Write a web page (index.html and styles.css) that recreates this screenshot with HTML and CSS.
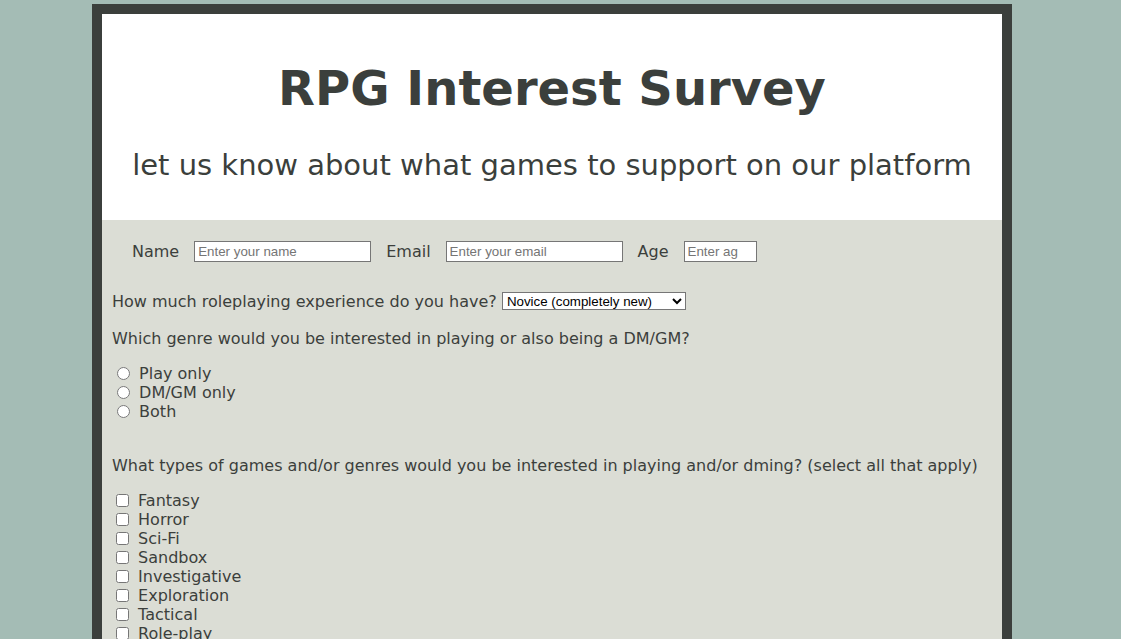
FILE: index.html
```html
<!DOCTYPE html>
<html lang="en">
<head>
<meta charset="utf-8">
<title>RPG Interest Survey</title>
<link rel="stylesheet" href="styles.css">
</head>
<body>
<main class="container">
  <header class="header">
    <h1 class="title">RPG Interest Survey</h1>
    <p class="subtitle">let us know about what games to support on our platform</p>
  </header>
  <form class="survey">
    <div class="info-row">
      <label for="name">Name</label>
      <input id="name" class="text-input" type="text" placeholder="Enter your name">
      <label for="email">Email</label>
      <input id="email" class="text-input" type="email" placeholder="Enter your email">
      <label for="age">Age</label>
      <input id="age" class="text-input age-input" type="number" placeholder="Enter age">
    </div>
    <p class="question question-first">How much roleplaying experience do you have?
      <select class="select">
        <option>Novice (completely new)</option>
        <option>Some experience</option>
        <option>Veteran</option>
      </select>
    </p>
    <p class="question question-second">Which genre would you be interested in playing or also being a DM/GM?</p>
    <div class="radio-list">
      <label class="option"><input type="radio" name="role" class="radio"> Play only</label>
      <label class="option"><input type="radio" name="role" class="radio"> DM/GM only</label>
      <label class="option"><input type="radio" name="role" class="radio"> Both</label>
    </div>
    <p class="question question-third">What types of games and/or genres would you be interested in playing and/or dming? (select all that apply)</p>
    <div class="check-list">
      <label class="option"><input type="checkbox" class="check"> Fantasy</label>
      <label class="option"><input type="checkbox" class="check"> Horror</label>
      <label class="option"><input type="checkbox" class="check"> Sci-Fi</label>
      <label class="option"><input type="checkbox" class="check"> Sandbox</label>
      <label class="option"><input type="checkbox" class="check"> Investigative</label>
      <label class="option"><input type="checkbox" class="check"> Exploration</label>
      <label class="option"><input type="checkbox" class="check"> Tactical</label>
      <label class="option"><input type="checkbox" class="check"> Role-play</label>
      <label class="option"><input type="checkbox" class="check"> Survival</label>
    </div>
  </form>
</main>
</body>
</html>
```

FILE: styles.css
```css
html, body {
  margin: 0;
  padding: 0;
}
body {
  background: #a4bcb5;
  font-family: Verdana, "DejaVu Sans", sans-serif;
  color: #3b3f3c;
  padding-right: 17px;
}
.container {
  width: 900px;
  margin: 4px auto 0;
  border: 10px solid #3b3f3c;
  background: #dbddd5;
}
.header {
  background: #ffffff;
  text-align: center;
  height: 206px;
  display: flex;
  flex-direction: column;
  align-items: center;
}
.title {
  margin: 46px 0 0;
  font-size: 48px;
  font-weight: bold;
  line-height: 56px;
}
.subtitle {
  margin: 31px 0 0;
  font-size: 29px;
  line-height: 36px;
}
.survey {
  padding: 21px 10px 20px;
  font-size: 16px;
}
.info-row {
  display: flex;
  align-items: center;
  gap: 15px;
  padding-left: 20px;
  height: 21px;
}
.text-input {
  width: 177px;
  height: 21px;
  box-sizing: border-box;
  border: 1px solid #767676;
  padding: 1px 3px;
  font-family: Arial, "Liberation Sans", sans-serif;
  font-size: 13.33px;
  background: #fff;
}
.age-input {
  width: 73px;
}
.question {
  margin: 0;
  line-height: 19px;
}
.question-first {
  margin-top: 30px;
}
.question-second {
  margin-top: 18px;
}
.question-third {
  margin-top: 35px;
}
.select {
  width: 184px;
  height: 18px;
  font-family: Arial, "Liberation Sans", sans-serif;
  font-size: 13.33px;
  vertical-align: 1px;
  border: 1px solid #767676;
  background: #fff;
  color: #000;
}
.radio-list,
.check-list {
  display: flex;
  flex-direction: column;
  margin-top: 16px;
}
.option {
  display: flex;
  align-items: center;
  height: 19px;
  white-space: pre;
}
.radio {
  margin: 0 4px 0 5px;
}
.check {
  margin: 0 4px 0 4px;
}
```
